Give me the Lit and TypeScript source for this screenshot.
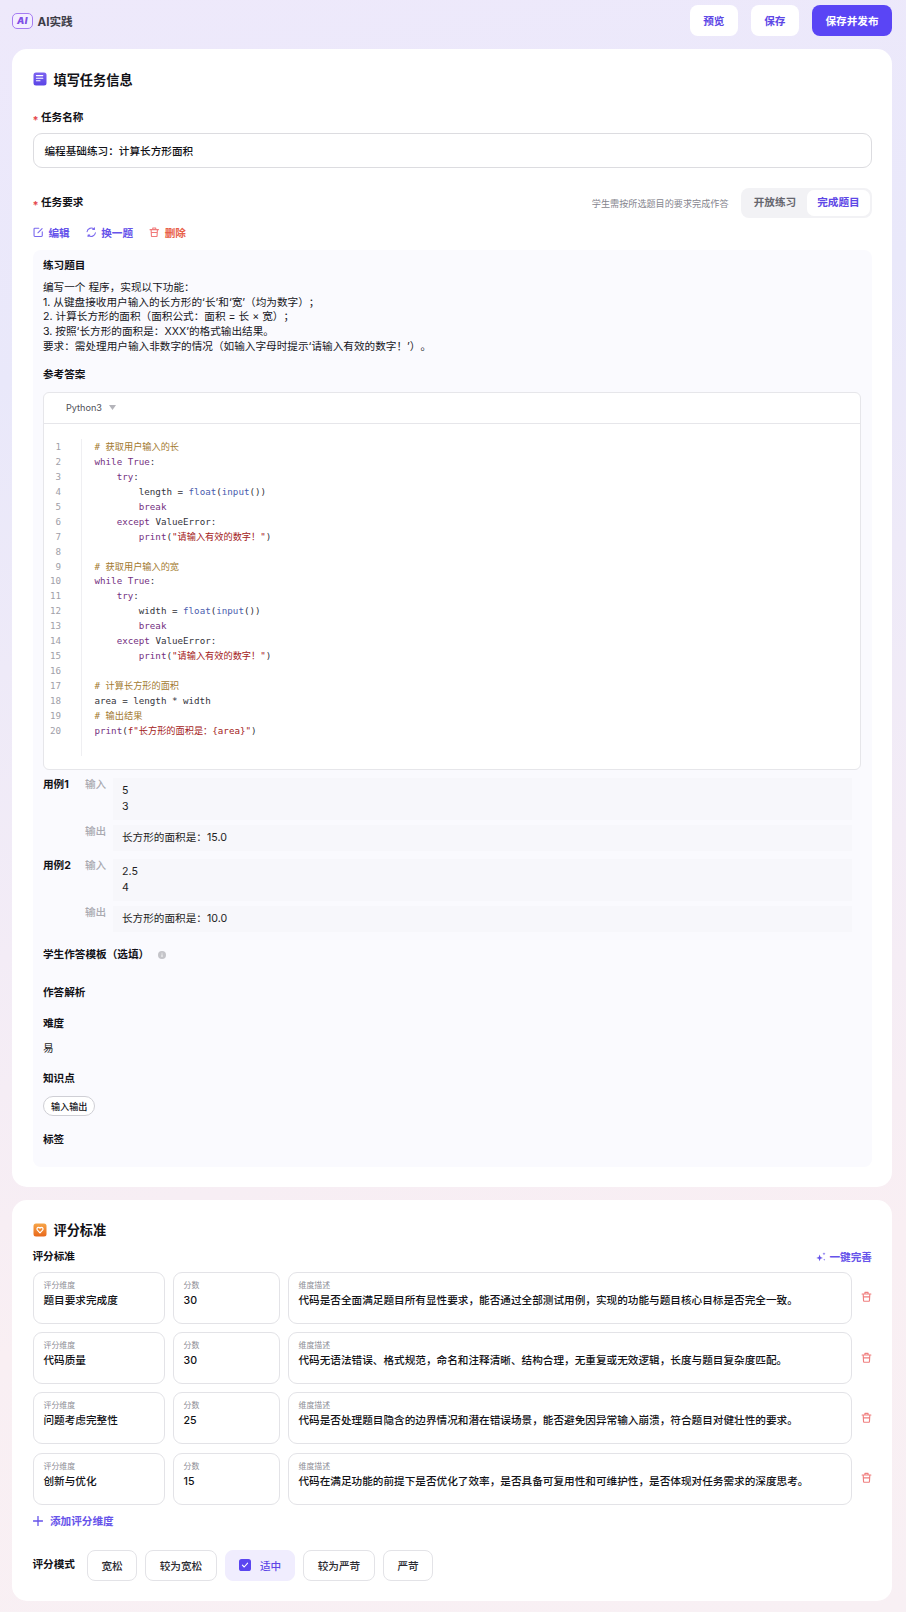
import { LitElement, html, css } from "lit";
import { customElement } from "lit/decorators.js";

const kw = (s: string) => html`<span class="k">${s}</span>`;
const fn = (s: string) => html`<span class="f">${s}</span>`;
const st = (s: string) => html`<span class="s">${s}</span>`;
const cm = (s: string) => html`<span class="c">${s}</span>`;

const readLoop = (name: string) => [
  html`${kw("while")} ${kw("True")}:`,
  html`    ${kw("try")}:`,
  html`        ${name} = ${fn("float")}(${fn("input")}())`,
  html`        ${kw("break")}`,
  html`    ${kw("except")} ValueError:`,
  html`        ${kw("print")}(${st('"请输入有效的数字！"')})`,
  html``,
];

const CODE = [
  cm("# 获取用户输入的长"),
  ...readLoop("length"),
  cm("# 获取用户输入的宽"),
  ...readLoop("width"),
  cm("# 计算长方形的面积"),
  html`area = length * width`,
  cm("# 输出结果"),
  html`${kw("print")}(${st('f"长方形的面积是：{area}"')})`,
];

const CASES = [
  { name: "用例1", input: ["5", "3"], output: "长方形的面积是：15.0" },
  { name: "用例2", input: ["2.5", "4"], output: "长方形的面积是：10.0" },
];

const CRITERIA = [
  { name: "题目要求完成度", score: "30", desc: "代码是否全面满足题目所有显性要求，能否通过全部测试用例，实现的功能与题目核心目标是否完全一致。" },
  { name: "代码质量", score: "30", desc: "代码无语法错误、格式规范，命名和注释清晰、结构合理，无重复或无效逻辑，长度与题目复杂度匹配。" },
  { name: "问题考虑完整性", score: "25", desc: "代码是否处理题目隐含的边界情况和潜在错误场景，能否避免因异常输入崩溃，符合题目对健壮性的要求。" },
  { name: "创新与优化", score: "15", desc: "代码在满足功能的前提下是否优化了效率，是否具备可复用性和可维护性，是否体现对任务需求的深度思考。" },
];

const MODES = ["宽松", "较为宽松", "适中", "较为严苛", "严苛"];

const trash = () => html`<svg viewBox="0 0 12 12" fill="none" stroke="currentColor" stroke-width="1.25" stroke-linecap="round" stroke-linejoin="round">
  <path d="M1.2 3h9.6M4.3 2.8V1.2h3.4v1.6M2.4 3.2l.4 7.2c0 .3.2.5.5.5h5.4c.3 0 .5-.2.5-.5l.4-7.2M3.2 6.2h5.6" />
</svg>`;

@customElement("app-root")
export class AppRoot extends LitElement {
  static styles = css`
    :host {
      display: block;
      width: 906px;
      min-height: 1612px;
      background: linear-gradient(172deg, #eee9fb 0%, #e9e8fa 22%, #f3ecf6 55%, #f9eff3 78%, #f8f0f4 100%);
      font-family: Inter, "Noto Sans CJK SC", sans-serif;
      font-size: 10.64px;
      color: #111116;
      box-sizing: border-box;
      padding-bottom: 11px;
      text-spacing-trim: space-all;
    }
    * { box-sizing: border-box; }
    svg { display: block; flex: none; }

    .top { height: 49px; display: flex; padding: 5px 14px 0 12px; justify-content: space-between; align-items: flex-start; }
    .brand { display: flex; align-items: center; gap: 4.5px; height: 31px; font-size: 11.6px; font-weight: 700; color: #3c3c46; }
    .logo { width: 21px; height: 16px; border: 1.4px solid #a67cf2; border-radius: 5px; display: flex; align-items: center; justify-content: center; font-size: 9.2px; font-weight: 900; font-style: italic; color: #7f50e6; letter-spacing: .4px; background: #f3eeff; line-height: 1; }
    .actions { display: flex; gap: 13.5px; }
    .tbtn { height: 31px; width: 47.5px; border-radius: 8px; background: #fff; color: #5d47e6; font-size: 10.64px; font-weight: 700; display: flex; align-items: center; justify-content: center; }
    .tbtn.main { width: 80px; background: #5a45f5; color: #fff; }

    .card { margin: 0 14px 0 12px; background: #fff; border-radius: 15px; padding: 21px 20px 20px 20.5px; }
    .card + .card { margin-top: 12.5px; }
    .h { display: flex; align-items: center; gap: 6.5px; height: 18px; font-size: 13.2px; font-weight: 700; color: #111116; padding-left: .5px; }
    .icon14 { width: 14px; height: 14px; }

    .label { height: 16px; line-height: 16px; font-weight: 700; color: #111116; }
    .req { display: flex; align-items: center; gap: 3px; }
    .star { color: #e5484d; font-size: 11px; width: 5.5px; line-height: 16px; padding-top: 4px; font-weight: 700; }
    .mt21 { margin-top: 22px; }

    .input { margin-top: 7px; height: 35px; border: 1px solid #dcdce0; border-radius: 9px; padding: 0 11px; display: flex; align-items: center; font-weight: 500; color: #111116; }

    .reqrow { margin-top: 20px; height: 30px; display: flex; align-items: center; justify-content: space-between; }
    .reqright { display: flex; align-items: center; gap: 12.5px; }
    .hint { font-size: 9.12px; color: #85858e; }
    .seg { width: 131px; height: 30px; padding: 2px; border-radius: 8px; background: #f2f2f5; display: flex; align-items: center; font-weight: 700; color: #66666e; }
    .seg span { flex: 1; text-align: center; height: 26px; line-height: 26px; border-radius: 7px; }
    .seg .on { flex: none; width: 63px; background: #fff; color: #5d47e6; }

    .tools { margin-top: 6px; height: 16px; display: flex; align-items: center; padding-left: .5px; font-weight: 600; }
    .tool { display: flex; align-items: center; gap: 5px; color: #6653ea; margin-right: 16px; }
    .tool svg { width: 10.5px; height: 10.5px; color: #7a68ee; }
    .tool.del { color: #e8614a; }
    .tool.del svg { color: #f07a7a; }

    .panel { margin-top: 10px; background: #fafafe; border-radius: 8px; padding: 8px 10px 19px 10.5px; }
    .body { margin-top: 6.9px; line-height: 14.75px; color: #16161c; }
    .mt { margin-top: 12.6px; }

    .codebox { margin-top: 8.5px; height: 378.5px; margin-right: 1px; background: #fff; border: 1px solid #e6e6ea; border-radius: 6px; }
    .codehead { height: 31px; border-bottom: 1px solid #e6e6ea; display: flex; align-items: center; padding-left: 22px; font-size: 9.12px; color: #4e4e56; gap: 7px; }
    .tri { width: 7px; height: 5px; }
    .codebody { display: flex; padding-top: 15px; font-family: "DejaVu Sans Mono", "Noto Sans CJK SC", monospace; font-size: 9.2px; line-height: 14.95px; }
    .nums { width: 17px; text-align: right; color: #a0a0a8; padding-top: 1.3px; }
    .code { margin-left: 19.5px; border-left: 1px solid #efeff2; padding: 1.3px 0 17px 13px; white-space: pre; color: #33333b; height: 317px; }
    .line { height: 14.95px; }
    .k { color: #74307f; }
    .f { color: #4a5cae; }
    .s { color: #a32020; }
    .c { color: #a37a30; }

    .case { display: grid; grid-template-columns: 42px 28px 1fr; row-gap: 5px; margin-top: 8px; margin-right: 10px; }
    .cname { font-weight: 700; line-height: 14px; }
    .io { color: #a9a9b0; line-height: 14px; font-weight: 500; }
    .val { grid-column: 3; background: #f7f7fb; padding: 5px 9px; line-height: 16px; color: #1e1e24; }
    .io.second { grid-column: 2; }

    .tplrow { margin-top: 15px; display: flex; align-items: center; gap: 9px; }
    .info { width: 8px; height: 8px; color: #c4c4c9; }
    .m22 { margin-top: 22px; }
    .m15 { margin-top: 15px; }
    .m9 { margin-top: 9px; }
    .m14 { margin-top: 14px; }
    .m16 { margin-top: 16px; }
    .easy { height: 16px; line-height: 16px; color: #1e1e24; }
    .pill { display: inline-flex; margin-top: 9px; height: 20px; padding: 0 7px; border: 1px solid #cfcfd5; border-radius: 10px; background: #fff; align-items: center; font-size: 9.12px; font-weight: 500; vertical-align: top; }
    .pillwrap { height: 29px; }

    .subrow { margin-top: 10px; height: 16px; display: flex; justify-content: space-between; align-items: center; }
    .magic { display: flex; align-items: center; gap: 4px; color: #6653ea; font-weight: 600; }
    .magic svg { width: 10px; height: 10px; }
    .rows { margin-top: 7px; display: flex; flex-direction: column; gap: 8.3px; }
    .row { display: grid; grid-template-columns: 132px 107px 564px 1fr; column-gap: 8px; height: 52px; }
    .cell { border: 1px solid #e3e3e7; border-radius: 9px; padding: 7px 10px; }
    .cell small { display: block; height: 10px; line-height: 10px; font-size: 7.9px; color: #8e8e96; }
    .cell div { margin-top: 3px; line-height: 16px; white-space: nowrap; font-weight: 500; color: #111116; }
    .rowdel { color: #f07f7f; display: flex; align-items: center; padding-left: 1px; margin-top: -1px; }
    .rowdel svg { width: 11px; height: 11.5px; }

    .add { margin-top: 8px; height: 16px; display: flex; align-items: center; gap: 7px; color: #6653ea; font-weight: 600; padding-left: .5px; }
    .add svg { width: 10px; height: 10px; }

    .mode { margin-top: 21px; display: flex; align-items: center; gap: 8px; }
    .mode .label { width: 46.5px; }
    .opt { height: 31px; border: 1px solid #e3e3e7; border-radius: 8px; background: #fff; display: flex; align-items: center; justify-content: center; width: 50px; color: #2a2a31; font-weight: 500; }
    .opt.w { width: 72px; }
    .opt.on { width: 70px; background: #f0edfe; border-color: #f0edfe; color: #5d47e6; gap: 9px; }
    .check { width: 12px; height: 12px; }
  `;

  render() {
    return html`
      <div class="top">
        <div class="brand"><span class="logo">AI</span><span>AI实践</span></div>
        <div class="actions">
          <div class="tbtn">预览</div>
          <div class="tbtn">保存</div>
          <div class="tbtn main">保存并发布</div>
        </div>
      </div>

      <section class="card">
        <div class="h">
          <svg class="icon14" viewBox="0 0 14 14">
            <defs><linearGradient id="dg" x1="0" y1="0" x2="0" y2="1"><stop offset="0" stop-color="#7d63f0" /><stop offset="1" stop-color="#5a45e6" /></linearGradient></defs>
            <rect x=".5" y=".5" width="13" height="13" rx="2.5" fill="url(#dg)" />
            <path d="M3.4 3.6h6.4M3.4 6.2h6.4M3.4 8.8h3.6" stroke="#fff" stroke-width="1.1" stroke-linecap="round" />
          </svg>
          填写任务信息
        </div>

        <div class="label req mt21"><span class="star">*</span>任务名称</div>
        <div class="input">编程基础练习：计算长方形面积</div>

        <div class="reqrow">
          <div class="label req"><span class="star">*</span>任务要求</div>
          <div class="reqright">
            <span class="hint">学生需按所选题目的要求完成作答</span>
            <div class="seg"><span>开放练习</span><span class="on">完成题目</span></div>
          </div>
        </div>

        <div class="tools">
          <div class="tool">
            <svg viewBox="0 0 12 12" fill="none" stroke="currentColor" stroke-width="1.25" stroke-linecap="round" stroke-linejoin="round"><path d="M6.6 1.4H2.2c-.6 0-1 .4-1 1v7.4c0 .6.4 1 1 1h7.4c.6 0 1-.4 1-1V5.6M5.6 6.6l4.8-4.8" /></svg>
            编辑
          </div>
          <div class="tool">
            <svg viewBox="0 0 12 12" fill="none" stroke="currentColor" stroke-width="1.25" stroke-linecap="round" stroke-linejoin="round"><path d="M1.2 5.4A4.9 4.9 0 0 1 9.2 2.4M10.8 6.6A4.9 4.9 0 0 1 2.8 9.6M9.6.9v1.9H7.7M2.4 11.1V9.2h1.9" /></svg>
            换一题
          </div>
          <div class="tool del">${trash()}删除</div>
        </div>

        <div class="panel">
          <div class="label">练习题目</div>
          <div class="body">
            编写一个 程序，实现以下功能：<br />
            1. 从键盘接收用户输入的长方形的‘长’和‘宽’（均为数字）；<br />
            2. 计算长方形的面积（面积公式：面积 = 长 × 宽）；<br />
            3. 按照‘长方形的面积是：XXX’的格式输出结果。<br />
            要求：需处理用户输入非数字的情况（如输入字母时提示‘请输入有效的数字！’）。
          </div>

          <div class="label mt">参考答案</div>
          <div class="codebox">
            <div class="codehead">
              Python3
              <svg class="tri" viewBox="0 0 7 5"><path d="M0 0h7L3.5 5z" fill="#b4b4ba" /></svg>
            </div>
            <div class="codebody">
              <div class="nums">${CODE.map((_, i) => html`<div class="line">${i + 1}</div>`)}</div>
              <div class="code">${CODE.map((l) => html`<div class="line">${l}</div>`)}</div>
            </div>
          </div>

          ${CASES.map(
            (c) => html`
              <div class="case">
                <div class="cname">${c.name}</div>
                <div class="io">输入</div>
                <div class="val">${c.input.map((v) => html`<div>${v}</div>`)}</div>
                <div class="io second">输出</div>
                <div class="val">${c.output}</div>
              </div>
            `
          )}

          <div class="label tplrow">
            学生作答模板（选填）
            <svg class="info" viewBox="0 0 8 8"><circle cx="4" cy="4" r="4" fill="currentColor" /><path d="M4 3.4v2.6M4 1.8v.7" stroke="#fff" stroke-width=".9" /></svg>
          </div>
          <div class="label m22">作答解析</div>
          <div class="label m15">难度</div>
          <div class="easy m9">易</div>
          <div class="label m14">知识点</div>
          <div class="pillwrap"><span class="pill">输入输出</span></div>
          <div class="label m16">标签</div>
        </div>
      </section>

      <section class="card">
        <div class="h">
          <svg class="icon14" viewBox="0 0 14 14">
            <defs><linearGradient id="og" x1="0" y1="0" x2="0" y2="1"><stop offset="0" stop-color="#f7a548" /><stop offset="1" stop-color="#e8681a" /></linearGradient></defs>
            <rect x=".5" y=".5" width="13" height="13" rx="2.5" fill="url(#og)" />
            <path d="M7 9.8 4.4 7.2C3.4 6 4.2 4.4 5.5 4.4c.7 0 1.2.3 1.5.8.3-.5.8-.8 1.5-.8 1.3 0 2.1 1.6 1.1 2.8z" fill="none" stroke="#fff" stroke-width="1.2" stroke-linejoin="round" />
          </svg>
          评分标准
        </div>
        <div class="subrow">
          <div class="label">评分标准</div>
          <div class="magic">
            <svg viewBox="0 0 10 10" fill="currentColor"><path d="M3.6 2.6 4.5 5l2.4.9-2.4.9-.9 2.4-.9-2.4L.3 5.9l2.4-.9zM8 .3l.4 1.1 1.1.4-1.1.4L8 3.3l-.4-1.1-1.1-.4 1.1-.4zM8.2 6.8l.3.7.7.3-.7.3-.3.7-.3-.7-.7-.3.7-.3z" /></svg>
            一键完善
          </div>
        </div>
        <div class="rows">
          ${CRITERIA.map(
            (c) => html`
              <div class="row">
                <div class="cell"><small>评分维度</small><div>${c.name}</div></div>
                <div class="cell"><small>分数</small><div>${c.score}</div></div>
                <div class="cell"><small>维度描述</small><div>${c.desc}</div></div>
                <div class="rowdel">${trash()}</div>
              </div>
            `
          )}
        </div>
        <div class="add">
          <svg viewBox="0 0 10 10" fill="none" stroke="currentColor" stroke-width="1.3" stroke-linecap="round"><path d="M5 .4v9.2M.4 5h9.2" /></svg>
          添加评分维度
        </div>
        <div class="mode">
          <div class="label">评分模式</div>
          ${MODES.map((m, i) =>
            i === 2
              ? html`<div class="opt on">
                  <svg class="check" viewBox="0 0 12 12"><rect width="12" height="12" rx="2.6" fill="#5a45f0" /><path d="M3.4 6.2 5.2 8l3.4-3.8" fill="none" stroke="#fff" stroke-width="1.1" stroke-linecap="round" stroke-linejoin="round" /></svg>
                  ${m}
                </div>`
              : html`<div class="opt ${m.length > 2 ? "w" : ""}">${m}</div>`
          )}
        </div>
      </section>
    `;
  }
}
